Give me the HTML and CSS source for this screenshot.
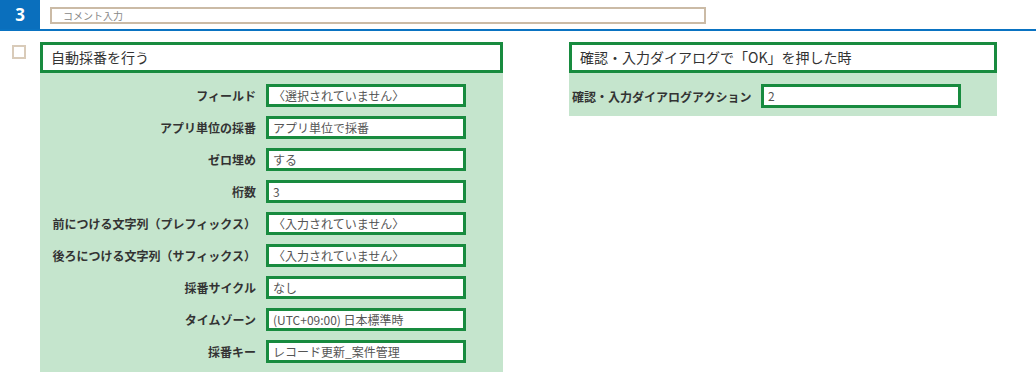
FILE: index.html
```html
<!DOCTYPE html>
<html lang="ja">
<head>
<meta charset="utf-8">
<link rel="stylesheet" href="styles.css">
</head>
<body>
<div class="topbar">
  <div class="num">3</div>
  <div class="comment">コメント入力</div>
</div>
<div class="content">
  <div class="check"></div>
  <div class="section left">
    <div class="head">自動採番を行う</div>
    <div class="panel">
      <div class="row"><div class="label">フィールド</div><div class="field">〈選択されていません〉</div></div>
      <div class="row"><div class="label">アプリ単位の採番</div><div class="field">アプリ単位で採番</div></div>
      <div class="row"><div class="label">ゼロ埋め</div><div class="field">する</div></div>
      <div class="row"><div class="label">桁数</div><div class="field">3</div></div>
      <div class="row"><div class="label">前につける文字列（プレフィックス）</div><div class="field">〈入力されていません〉</div></div>
      <div class="row"><div class="label">後ろにつける文字列（サフィックス）</div><div class="field">〈入力されていません〉</div></div>
      <div class="row"><div class="label">採番サイクル</div><div class="field">なし</div></div>
      <div class="row"><div class="label">タイムゾーン</div><div class="field">(UTC+09:00) 日本標準時</div></div>
      <div class="row"><div class="label">採番キー</div><div class="field">レコード更新_案件管理</div></div>
    </div>
  </div>
  <div class="section right">
    <div class="head">確認・入力ダイアログで「OK」を押した時</div>
    <div class="panel">
      <div class="row"><div class="label">確認・入力ダイアログアクション</div><div class="field">2</div></div>
    </div>
  </div>
</div>
</body>
</html>
```
FILE: styles.css
```css
* { box-sizing: border-box; }
body {
  margin: 0;
  background: #fff;
  font-family: "Noto Sans CJK JP", "Noto Sans", sans-serif;
  color: #333;
}
.topbar {
  display: flex;
  align-items: flex-start;
  height: 31px;
  border-bottom: 2px solid #0a73c2;
}
.num {
  width: 40px;
  height: 29px;
  background: #0a6fbd;
  color: #fff;
  font-family: "Open Sans", "Noto Sans", sans-serif;
  font-weight: 700;
  font-size: 17px;
  line-height: 29px;
  text-align: center;
}
.comment {
  margin: 7px 0 0 10px;
  width: 656px;
  height: 17px;
  border: 2px solid #cbbba6;
  font-size: 10px;
  line-height: 13px;
  color: #888;
  padding-left: 11px;
}
.content {
  display: flex;
  align-items: flex-start;
  padding-top: 11px;
}
.check {
  width: 14px;
  height: 14px;
  margin: 3px 0 0 12px;
  border: 2px solid #d9cbb9;
}
.section { display: flex; flex-direction: column; }
.left { margin-left: 14px; width: 463px; }
.right { margin-left: 66px; width: 428px; }
.head {
  height: 31px;
  border: 3px solid #188b3f;
  background: #fff;
  font-size: 14px;
  line-height: 25px;
  padding-left: 8px;
  color: #333;
}
.panel {
  background: #c5e5cd;
  padding: 11px 0 9px 0;
  display: flex;
  flex-direction: column;
  gap: 9px;
}
.right .panel { padding-bottom: 8px; }
.row { display: flex; align-items: center; }
.label {
  width: 216px;
  text-align: right;
  font-size: 12px;
  font-weight: 700;
  color: #333;
  margin-right: 10px;
  white-space: nowrap;
}
.right .row .label {
  width: 179px;
  text-align: left;
  margin-left: 3px;
  margin-right: 10px;
}
.field {
  width: 200px;
  height: 23px;
  background: #fff;
  border: 3px solid #188b3f;
  font-size: 12px;
  line-height: 17px;
  color: #555;
  padding-left: 4px;
  white-space: nowrap;
}
.right .field { height: 24px; }
```
